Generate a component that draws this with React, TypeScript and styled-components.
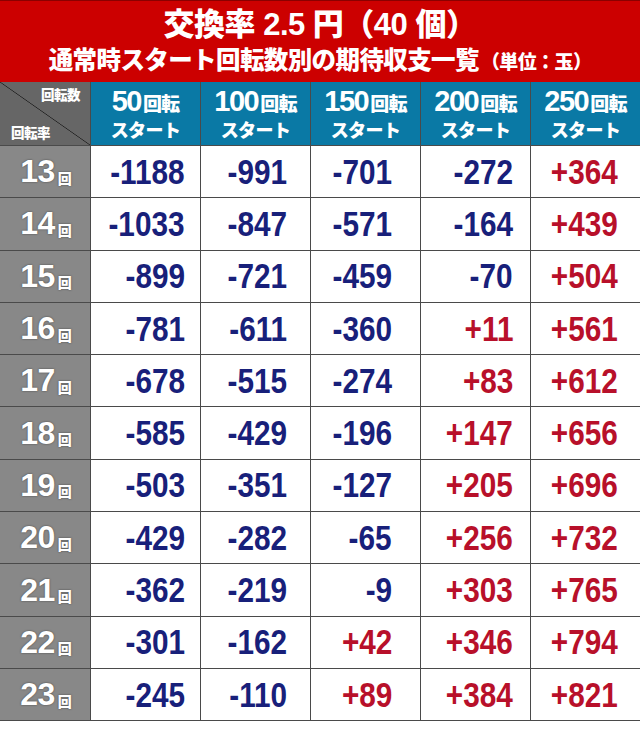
import * as React from "react";
import styled, { createGlobalStyle } from "styled-components";

const GlobalStyle = createGlobalStyle`
  html, body {
    margin: 0;
    padding: 0;
    background: #ffffff;
  }
  body {
    font-family: "Liberation Sans", "Noto Sans CJK JP", sans-serif;
  }
`;

const Page = styled.div`
  width: 640px;
  background: #ffffff;
`;

const TitleBand = styled.header`
  height: 82px;
  box-sizing: border-box;
  background: #cc0000;
  border-top: 1px solid #8a0000;
  color: #ffffff;
  display: flex;
  flex-direction: column;
  align-items: center;
  justify-content: center;
  font-weight: 900;
`;

const TitleMain = styled.div`
  font-size: 31px;
  line-height: 36px;
  letter-spacing: -0.5px;
  font-family: "Liberation Sans", "Noto Sans CJK JP", sans-serif;
`;

const TitleSub = styled.div`
  font-size: 24.5px;
  line-height: 32px;
  font-family: "Noto Sans CJK JP", sans-serif;
  letter-spacing: -0.6px;
`;

const Unit = styled.span`
  font-size: 19px;
  margin-left: 2px;
`;

const Grid = styled.div`
  display: grid;
  grid-template-columns: 90px repeat(5, 1fr);
  grid-template-rows: 63px;
  grid-auto-rows: 51.3px;
  gap: 1px;
  background: #4a4a4a;
  border-bottom: 1px solid #4a4a4a;
`;

const Corner = styled.div`
  background: linear-gradient(
    to top right,
    #666666 calc(50% - 0.7px),
    #222222 50%,
    #666666 calc(50% + 0.7px)
  );
  color: #ffffff;
  font-family: "Noto Sans CJK JP", sans-serif;
  font-weight: 900;
  font-size: 13.5px;
  letter-spacing: -0.5px;
  display: flex;
  flex-direction: column;
  justify-content: space-between;
  padding: 3px 10px 4px 11px;
`;

const CornerTop = styled.span`
  align-self: flex-end;
  line-height: 18px;
`;

const CornerBottom = styled.span`
  align-self: flex-start;
  line-height: 18px;
`;

const HeadCell = styled.div`
  background: #0a79a5;
  color: #ffffff;
  font-weight: 700;
  display: flex;
  flex-direction: column;
  align-items: center;
  justify-content: center;
  padding-top: 1px;
`;

const HeadNum = styled.div`
  font-family: "Liberation Sans", sans-serif;
  font-size: 29px;
  line-height: 29px;
  letter-spacing: -1.5px;
`;

const HeadKanji = styled.span`
  font-family: "Noto Sans CJK JP", sans-serif;
  font-weight: 900;
  font-size: 19px;
  letter-spacing: -0.8px;
  margin-left: 2px;
`;

const HeadSub = styled.div`
  font-family: "Noto Sans CJK JP", sans-serif;
  font-weight: 900;
  font-size: 18px;
  line-height: 24px;
  letter-spacing: -0.6px;
`;

const RowLabel = styled.div`
  background: #888888;
  color: #ffffff;
  font-weight: 700;
  display: flex;
  align-items: center;
  justify-content: center;
  padding-left: 2px;
  text-shadow: 0 0 2px rgba(0, 0, 0, 0.55);
`;

const LabelNum = styled.span`
  font-family: "Liberation Sans", sans-serif;
  font-size: 32px;
  letter-spacing: -0.5px;
`;

const LabelUnit = styled.span`
  font-family: "Noto Sans CJK JP", sans-serif;
  font-weight: 900;
  font-size: 14px;
  margin-left: 3px;
  margin-top: 12px;
`;

const ValueCell = styled.div<{ $plus: boolean; $pad: number }>`
  background: #ffffff;
  color: ${(p) => (p.$plus ? "#b8102a" : "#18207a")};
  font-family: "Liberation Sans", sans-serif;
  font-weight: 700;
  font-size: 35px;
  display: flex;
  align-items: center;
  justify-content: flex-end;
  padding-right: ${(p) => p.$pad}px;
`;

const Value = styled.span`
  display: inline-block;
  transform: scaleX(0.85);
  transform-origin: right center;
`;

const spins = [50, 100, 150, 200, 250];
const pads = [15, 23, 28, 17, 22];

const rows: [number, number[]][] = [
  [13, [-1188, -991, -701, -272, 364]],
  [14, [-1033, -847, -571, -164, 439]],
  [15, [-899, -721, -459, -70, 504]],
  [16, [-781, -611, -360, 11, 561]],
  [17, [-678, -515, -274, 83, 612]],
  [18, [-585, -429, -196, 147, 656]],
  [19, [-503, -351, -127, 205, 696]],
  [20, [-429, -282, -65, 256, 732]],
  [21, [-362, -219, -9, 303, 765]],
  [22, [-301, -162, 42, 346, 794]],
  [23, [-245, -110, 89, 384, 821]],
];

const fmt = (v: number) => (v > 0 ? `+${v}` : `${v}`);

export default function App() {
  return (
    <Page>
      <GlobalStyle />
      <TitleBand>
        <TitleMain>交換率 2.5 円（40 個）</TitleMain>
        <TitleSub>
          通常時スタート回転数別の期待収支一覧<Unit>（単位：玉）</Unit>
        </TitleSub>
      </TitleBand>
      <Grid>
        <Corner>
          <CornerTop>回転数</CornerTop>
          <CornerBottom>回転率</CornerBottom>
        </Corner>
        {spins.map((s) => (
          <HeadCell key={s}>
            <HeadNum>
              {s}
              <HeadKanji>回転</HeadKanji>
            </HeadNum>
            <HeadSub>スタート</HeadSub>
          </HeadCell>
        ))}
        {rows.map(([rate, values]) => (
          <React.Fragment key={rate}>
            <RowLabel>
              <LabelNum>{rate}</LabelNum>
              <LabelUnit>回</LabelUnit>
            </RowLabel>
            {values.map((v, i) => (
              <ValueCell key={i} $plus={v > 0} $pad={pads[i]}>
                <Value>{fmt(v)}</Value>
              </ValueCell>
            ))}
          </React.Fragment>
        ))}
      </Grid>
    </Page>
  );
}
